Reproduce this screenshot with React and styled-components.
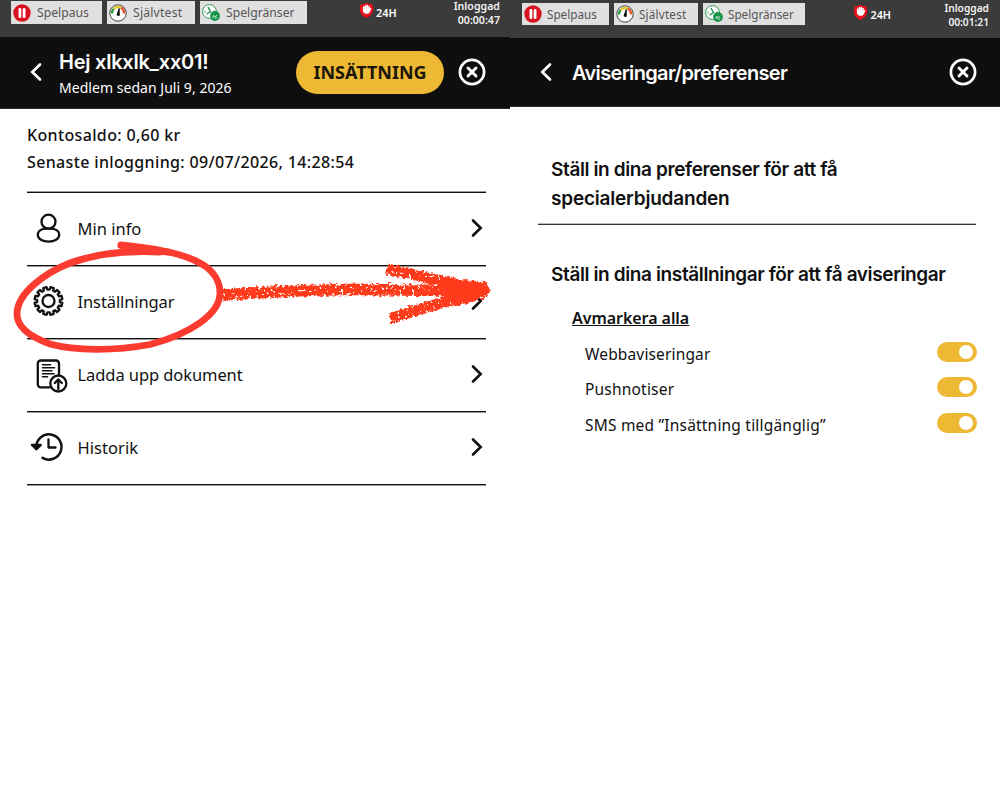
import React from "react";
import { useState } from "react";
import styled, { createGlobalStyle } from "styled-components";

const menuList = [
  { id: 1, title: "Min info", icon: "user", spacing: 0 },
  { id: 2, title: "Inställningar", icon: "gear", spacing: -0.1 },
  { id: 3, title: "Ladda upp dokument", icon: "document", spacing: -0.08 },
  { id: 4, title: "Historik", icon: "history", spacing: 0.05 },
];

const noticeList = [
  { id: 1, title: "Webbaviseringar", spacing: 0.15 },
  { id: 2, title: "Pushnotiser", spacing: 0.2 },
  { id: 3, title: "SMS med ”Insättning tillgänglig”", spacing: 0.2 },
];

// 12 teeth around the center (16, 16)
const gearPath = () => {
  const points = [];
  for (let i = 0; i < 12; i++) {
    [
      [-9.5, 11.4],
      [-7, 14],
      [7, 14],
      [9.5, 11.4],
    ].forEach(([offset, r]) => {
      const a = ((i * 30 + 15 + offset) * Math.PI) / 180;
      points.push(
        `${(16 + r * Math.sin(a)).toFixed(2)} ${(16 - r * Math.cos(a)).toFixed(2)}`
      );
    });
  }
  return `M${points.join("L")}Z`;
};

function MenuIcon({ name }) {
  return (
    <IconSvg viewBox="0 0 34 34" width="34" height="34">
      {name === "user" && (
        <g transform="translate(0.5 0.8)">
          <circle cx="16" cy="8.9" r="7" />
          <path d="M10.8 16.200C7.300 17 5.300 19.200 5.300 22c0 4.200 4.700 6.800 10.700 6.800s10.700-2.600 10.700-6.800c0-2.800-2-5-5.500-5.800-1.700-.4-3.200-.3-5.200-.3s-3.500-.1-5.200.3z" />
        </g>
      )}
      {name === "gear" && (
        <g transform="translate(0.5 0)">
          <path d={gearPath()} />
          <circle cx="16" cy="16" r="6" />
        </g>
      )}
      {name === "document" && (
        <g transform="translate(0 1)">
          <path d="M18 28.300H8.800a3 3 0 0 1-3-3V4.500a3 3 0 0 1 3-3h15.200a3 3 0 0 1 3 3V16" />
          <path
            strokeWidth="1.600"
            d="M10.500 5.700h8M10.500 8.700h12M10.500 11.700h9.500M10.500 14.700h11.500M10.500 17.700h5"
          />
          <circle cx="26.300" cy="24.500" r="8" fill="#fff" />
          <path d="M26.300 30v-9.500M22.800 24l3.500-3.500 3.500 3.500" />
        </g>
      )}
      {name === "history" && (
        <g>
          <path
            strokeWidth="2.500"
            d="M4.300 16.500A12.600 12.600 0 1 1 10.600 26.900"
          />
          <path d="M0 14l4.300 4.300 4.500-4.300z" fill="#111" />
          <path d="M16.500 8.500v8h7" />
        </g>
      )}
    </IconSvg>
  );
}

function Badge({ name }) {
  return (
    <svg viewBox="0 0 18 18" width="18" height="18">
      {name === "pause" && (
        <g>
          <circle cx="9" cy="9" r="8.700" fill="#d9121f" />
          <path
            d="M6.900 5.300v7.400M11.100 5.300v7.400"
            stroke="#fff"
            strokeWidth="2.800"
            strokeLinecap="round"
          />
        </g>
      )}
      {name === "gauge" && (
        <g fill="none">
          <circle cx="9" cy="9" r="8.200" fill="#fff" stroke="#444" />
          <path d="M3 9.500a6 6 0 0 1 1.800-4.600" stroke="#2fa044" strokeWidth="2.400" />
          <path d="M4.800 4.900a6 6 0 0 1 7-1.300" stroke="#e8c92a" strokeWidth="2.400" />
          <path d="M11.800 3.600a6 6 0 0 1 3.200 5.900" stroke="#e2562a" strokeWidth="2.400" />
          <path d="M8 11l2.200-6.500v7z" fill="#111" stroke="#111" />
        </g>
      )}
      {name === "limit" && (
        <g fill="none">
          <circle cx="7.500" cy="7.500" r="6.900" fill="#fff" stroke="#2d9a52" />
          <path
            d="M6 3l2.500 4.700L4.500 10M2.500 7.500h1M11.500 7.500h1"
            stroke="#178a43"
            strokeWidth="1.300"
          />
          <circle cx="13" cy="12" r="4.900" fill="#149447" />
          <path
            d="M10.700 14l1-2.800 1.300 2.200 2.200-2.600M13.200 14.500l2-.8"
            stroke="#d5f0de"
            strokeWidth=".9"
          />
        </g>
      )}
    </svg>
  );
}

function StatusBar({ time, right }) {
  return (
    <TopBar $right={right}>
      <BadgeList $right={right}>
        <BadgeBox $width={right ? 87 : 91} $right={right}>
          <Badge name="pause" />
          Spelpaus
        </BadgeBox>
        <BadgeBox $width={right ? 84 : 88} $right={right} $spacing={0.2}>
          <Badge name="gauge" />
          Självtest
        </BadgeBox>
        <BadgeBox $width={right ? 102 : 107} $right={right}>
          <Badge name="limit" />
          Spelgränser
        </BadgeBox>
      </BadgeList>
      <DayBox $right={right}>
        <ShieldSvg viewBox="0 0 16 18" width="15" height="17">
          <path
            d="M8 .5l2 1.200 4.500.8.800 6-2 5L8 17.200l-5.300-3.700-2-5 .8-6L6 1.700z"
            fill="#e8101a"
          />
          <path
            d="M5 8V5.200M6.900 8V4M8.800 8V3.800M10.700 8V4.800"
            stroke="#fff"
            strokeWidth="1.700"
            strokeLinecap="round"
          />
          <path d="M4.200 7h7.300l.9-.9.800.7-1.700 4L9.700 12.500H6.300L4.200 10z" fill="#fff" />
        </ShieldSvg>
        24H
      </DayBox>
      <LoginTime $right={right}>
        <span>Inloggad</span>
        <span>{time}</span>
      </LoginTime>
    </TopBar>
  );
}

function BackIcon() {
  return (
    <BackSvg viewBox="0 0 12 20" width="12" height="20">
      <path
        d="M10 2.500L2.300 10l7.700 7.500"
        fill="none"
        stroke="#fff"
        strokeWidth="2.700"
        strokeLinecap="round"
      />
    </BackSvg>
  );
}

function CloseIcon() {
  return (
    <svg viewBox="0 0 28 28" width="28" height="28">
      <g fill="none" stroke="#fff" strokeLinecap="round">
        <circle cx="14" cy="14" r="12.100" strokeWidth="2.700" />
        <path d="M10 10l8 8M18 10l-8 8" strokeWidth="2.900" />
      </g>
    </svg>
  );
}

// hand drawn circle and crayon arrow over the menu
function Marker() {
  return (
    <MarkerSvg viewBox="0 0 500 130" width="500" height="130">
      <defs>
        <filter id="crayon" x="-5%" y="-20%" width="110%" height="140%">
          <feTurbulence
            type="fractalNoise"
            baseFrequency="0.34"
            numOctaves="3"
            seed="4"
            result="noise"
          />
          <feDisplacementMap
            in="SourceGraphic"
            in2="noise"
            scale="6"
            xChannelSelector="R"
            yChannelSelector="G"
            result="rough"
          />
          <feColorMatrix
            in="noise"
            type="matrix"
            values="0 0 0 0 0  0 0 0 0 0  0 0 0 0 0  0 0 10 0 -2.6"
            result="holes"
          />
          <feComposite in="rough" in2="holes" operator="in" />
        </filter>
        <filter id="rough" x="-10%" y="-20%" width="120%" height="140%">
          <feTurbulence
            type="fractalNoise"
            baseFrequency="0.28"
            numOctaves="3"
            seed="9"
            result="noise"
          />
          <feDisplacementMap
            in="SourceGraphic"
            in2="noise"
            scale="7"
            xChannelSelector="R"
            yChannelSelector="G"
          />
        </filter>
      </defs>
      <g fill="none" stroke="#fb3b30" strokeLinecap="round" strokeWidth="6.800">
        <path d="M121 14C150 17 180 21 200 32C215 40 220 52 220 62C220 83 190 103 150 113.500C115 120 75 120 50 113C25 104 17 94 17 83C17 62 45 42 70 32C95 23 125 19 160 21" />
        <path d="M121 14.500C135 18 150 19 168 21" />
      </g>
      <g fill="none" stroke="#ff3b1d" filter="url(#crayon)">
        <path d="M223 64C270 61 310 59 345 58.500S410 60 450 59" strokeWidth="11.500" />
        <path d="M387 38C410 42 430 48 460 54" strokeWidth="11" />
        <path d="M390 88C410 81 430 75 455 68" strokeWidth="11" />
      </g>
      <g fill="#ff3b1d" filter="url(#rough)">
        <path d="M436 50L446 47L462 49L486 51L491 60L480 69L456 75L445 68Z" />
      </g>
    </MarkerSvg>
  );
}

export default function App() {
  const [checked, setChecked] = useState([1, 2, 3]);

  const toggle = (id) => {
    setChecked(
      checked.includes(id) ? checked.filter((x) => x !== id) : [...checked, id]
    );
  };

  return (
    <TotalWrap>
      <GlobalStyle />
      <Panel>
        <StatusBar time="00:00:47" />
        <Header>
          <BackIcon />
          <UserBox>
            <HeaderTitle>Hej xlkxlk_xx01!</HeaderTitle>
            <MemberText>Medlem sedan Juli 9, 2026</MemberText>
          </UserBox>
          <DepositButton>INSÄTTNING</DepositButton>
          <CloseIcon />
        </Header>
        <AccountBox>
          <div>Kontosaldo: 0,60 kr</div>
          <div>Senaste inloggning: 09/07/2026, 14:28:54</div>
        </AccountBox>
        <MenuBox>
          {menuList.map((data) => {
            return (
              <MenuRow key={data.id}>
                <MenuIcon name={data.icon} />
                <MenuTitle $spacing={data.spacing}>{data.title}</MenuTitle>
                <ArrowSvg viewBox="0 0 12 20" width="12" height="20">
                  <path
                    d="M2 2.500l7.700 7.500-7.700 7.500"
                    fill="none"
                    stroke="#111"
                    strokeWidth="2.600"
                    strokeLinecap="round"
                  />
                </ArrowSvg>
              </MenuRow>
            );
          })}
          <Marker />
        </MenuBox>
      </Panel>
      <Panel $right>
        <StatusBar time="00:01:21" right />
        <Header $right>
          <BackIcon />
          <PageTitle>Aviseringar/preferenser</PageTitle>
          <CloseIcon />
        </Header>
        <OfferBox>
          <OfferTitle>Ställ in dina preferenser för att få</OfferTitle>
          <OfferTitle $spacing={-0.2}>specialerbjudanden</OfferTitle>
        </OfferBox>
        <NoticeBox>
          <OfferTitle>Ställ in dina inställningar för att få aviseringar</OfferTitle>
          <UncheckAll onClick={() => setChecked([])}>Avmarkera alla</UncheckAll>
          {noticeList.map((data) => {
            return (
              <NoticeRow key={data.id}>
                <NoticeTitle $spacing={data.spacing}>{data.title}</NoticeTitle>
                <Switch
                  $on={checked.includes(data.id)}
                  onClick={() => toggle(data.id)}
                />
              </NoticeRow>
            );
          })}
        </NoticeBox>
      </Panel>
    </TotalWrap>
  );
}

const GlobalStyle = createGlobalStyle`
  * {
    box-sizing: border-box;
  }
  body {
    margin: 0;
    background: #fff;
  }
`;

const TotalWrap = styled.div`
  display: flex;
  width: 1000px;
  height: 800px;
  overflow: hidden;
  background: #fff;
  color: #111;
  font-family: "Noto Sans", sans-serif;
  white-space: nowrap;
`;

const Panel = styled.div`
  width: ${(props) => (props.$right ? 490 : 510)}px;
  flex-shrink: 0;
`;

const TopBar = styled.div`
  display: flex;
  justify-content: space-between;
  height: ${(props) => (props.$right ? 38 : 37)}px;
  padding-right: ${(props) => (props.$right ? 11 : 10)}px;
  background: #3b3b3b;
`;

const BadgeList = styled.div`
  display: flex;
  gap: 5px;
  padding: ${(props) => (props.$right ? "3px 0 0 12px" : "1px 0 0 11px")};
`;

const BadgeBox = styled.div`
  display: flex;
  align-items: center;
  gap: ${(props) => (props.$right ? 5 : 6)}px;
  width: ${(props) => props.$width}px;
  height: ${(props) => (props.$right ? 22 : 23)}px;
  padding-left: 2px;
  background: #e1e0e0;
  color: #555;
  font-size: ${(props) => (props.$right ? 11.7 : 12.2)}px;
  letter-spacing: ${(props) => props.$spacing || 0}px;
`;

const DayBox = styled.div`
  display: flex;
  align-items: center;
  gap: 2px;
  height: 24px;
  margin-top: ${(props) => (props.$right ? 2 : 0)}px;
  margin-left: -5px;
  color: #fff;
  font-size: 10.8px;
  font-weight: 600;
`;

const ShieldSvg = styled.svg`
  margin-bottom: 4px;
`;

const LoginTime = styled.div`
  display: flex;
  flex-direction: column;
  align-items: flex-end;
  margin-top: ${(props) => (props.$right ? 1 : 0)}px;
  color: #f2f2f2;
  font-size: ${(props) => (props.$right ? 10.2 : 10.6)}px;
  font-weight: 600;
  line-height: ${(props) => (props.$right ? 14 : 13.5)}px;
`;

const Header = styled.div`
  display: flex;
  align-items: center;
  height: ${(props) => (props.$right ? 69 : 72)}px;
  padding: ${(props) => (props.$right ? "0 23px 1px 30px" : "0 24px 1px 30px")};
  border-bottom: 1px solid #2a2a2a;
  background: #0e0e0e;
  color: #fff;
`;

const BackSvg = styled.svg`
  flex-shrink: 0;
`;

const UserBox = styled.div`
  flex: 1;
  padding: 4px 0 0 17px;
`;

const HeaderTitle = styled.div`
  font-family: Inter, sans-serif;
  font-size: 20px;
  font-weight: 600;
  line-height: 26px;
  letter-spacing: -0.24px;
`;

const MemberText = styled.div`
  font-size: 14px;
  line-height: 25px;
  letter-spacing: 0.04px;
`;

const PageTitle = styled(HeaderTitle)`
  flex: 1;
  padding: 2px 0 0 20px;
  letter-spacing: -0.67px;
`;

const DepositButton = styled.button`
  width: 148px;
  height: 43px;
  margin-right: 14px;
  padding: 0;
  border: none;
  border-radius: 22px;
  background: #edb833;
  color: #1a1608;
  font-family: "Noto Sans", sans-serif;
  font-size: 18px;
  font-weight: 700;
  cursor: pointer;
`;

const AccountBox = styled.div`
  padding: 13px 27px 16px;
  font-size: 16px;
  font-weight: 550;
  line-height: 27px;
  letter-spacing: 0.35px;
`;

const MenuBox = styled.div`
  position: relative;
  width: 459px;
  margin-left: 27px;
  border-top: 1px solid #111;
  box-shadow: 0 -1px 0 #999;
`;

const MenuRow = styled.div`
  display: flex;
  align-items: center;
  height: 73px;
  padding: 0 3px 1px 5px;
  border-bottom: 1px solid #111;
  box-shadow: 0 1px 0 #999;
`;

const ArrowSvg = styled.svg`
  margin-bottom: 2px;
`;

const IconSvg = styled.svg`
  overflow: visible;
  fill: none;
  stroke: #111;
  stroke-width: 2.3;
  stroke-linecap: round;
  stroke-linejoin: round;
`;

const MenuTitle = styled.div`
  flex: 1;
  padding-left: 11.5px;
  font-size: 16.5px;
  letter-spacing: ${(props) => props.$spacing}px;
`;

const MarkerSvg = styled.svg`
  position: absolute;
  left: -27px;
  top: 38px;
  overflow: visible;
  pointer-events: none;
`;

const OfferBox = styled.div`
  width: 438px;
  height: 118px;
  margin-left: 28px;
  padding: 48px 0 0 13px;
  border-bottom: 1px solid #333;
  box-shadow: 0 -1px 0 #bbb inset;
`;

const OfferTitle = styled.div`
  font-family: Inter, sans-serif;
  font-size: 19px;
  font-weight: 600;
  line-height: 29px;
  letter-spacing: ${(props) => props.$spacing || -0.38}px;
`;

const NoticeBox = styled.div`
  padding: 35px 23px 0 41px;
`;

const UncheckAll = styled.div`
  width: fit-content;
  margin: 17px 0 6px 21px;
  font-size: 16px;
  font-weight: 600;
  line-height: 24px;
  letter-spacing: -0.05px;
  text-decoration: underline;
  cursor: pointer;
`;

const NoticeRow = styled.div`
  display: flex;
  align-items: center;
  justify-content: space-between;
  height: 35.6px;
  padding-left: 34px;
`;

const NoticeTitle = styled.div`
  font-size: 15.5px;
  letter-spacing: ${(props) => props.$spacing}px;
`;

const Switch = styled.div`
  display: flex;
  align-items: center;
  justify-content: ${(props) => (props.$on ? "flex-end" : "flex-start")};
  width: 40px;
  height: 20px;
  margin-bottom: 4px;
  padding: 0 4px;
  border-radius: 10px;
  background: ${(props) => (props.$on ? "#edb833" : "#ccc")};
  cursor: pointer;

  &::after {
    content: "";
    width: 14px;
    height: 14px;
    border-radius: 50%;
    background: #fff;
  }
`;
